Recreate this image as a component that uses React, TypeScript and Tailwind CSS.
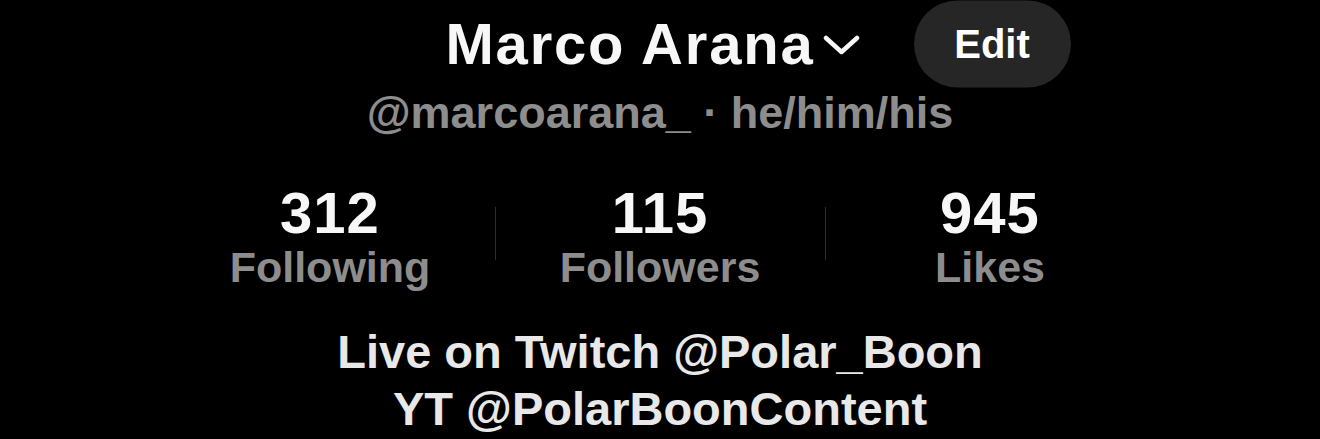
import React from 'react';

const stats = [
  { value: '312', label: 'Following' },
  { value: '115', label: 'Followers' },
  { value: '945', label: 'Likes' },
];

const font = { fontFamily: '"Liberation Sans", Arial, sans-serif' };

export default function App() {
  return (
    <div className="w-[1320px] h-[439px] bg-black overflow-hidden flex flex-col items-center" style={font}>
      {/* NAME ROW */}
      <div className="h-[87px] flex items-center">
        <div className="relative -ml-[15px] flex items-center">
          <span className="text-[58px] leading-none font-bold text-[#f7f7f7] tracking-[1.8px]">Marco Arana</span>
          <svg width="37" height="22" viewBox="0 0 37 22" className="ml-[8px] mt-[2px]">
            <polyline points="3,4 18.5,18 34,4" fill="none" stroke="#f7f7f7" strokeWidth="4.5" strokeLinecap="round" strokeLinejoin="round" />
          </svg>
          <button className="absolute left-[calc(100%+54px)] top-1/2 -translate-y-1/2 w-[157px] h-[87px] rounded-full bg-[#262626] text-white text-[40px] font-bold leading-none">
            Edit
          </button>
        </div>
      </div>

      {/* HANDLE */}
      <div className="mt-[3px] text-[45px] leading-none font-bold text-[#8d8d8d]">
        @marcoarana_ · he/him/his
      </div>

      {/* STATS */}
      <div className="mt-[49px] flex">
        {stats.map((s, i) => (
          <React.Fragment key={s.label}>
            {i > 0 && <div className="w-px h-[53px] bg-[#2e2e2e] self-center -mt-[6px]" />}
            <div className="w-[329px] flex flex-col items-center">
              <span className="text-[58px] leading-none font-bold text-[#f7f7f7] tracking-[1px]">{s.value}</span>
              <span className="mt-[4px] text-[43px] leading-none font-bold text-[#8d8d8d]">{s.label}</span>
            </div>
          </React.Fragment>
        ))}
      </div>

      {/* BIO */}
      <div className="mt-[34px] text-[47px] leading-[57px] font-bold text-[#e8e8e8] text-center">
        <div>Live on Twitch @Polar_Boon</div>
        <div>YT @PolarBoonContent</div>
      </div>
    </div>
  );
}
